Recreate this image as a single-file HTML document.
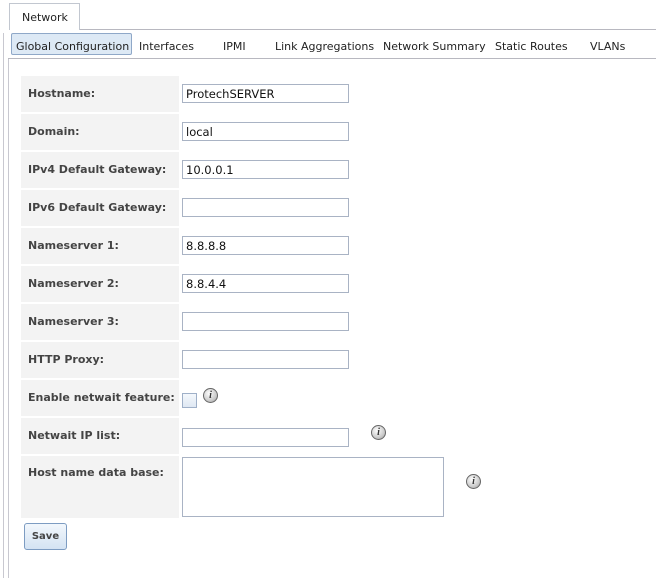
<!DOCTYPE html>
<html><head><style>
body{margin:0;width:656px;height:578px;background:#fff;position:relative;overflow:hidden;font-family:"DejaVu Sans","Liberation Sans",sans-serif;font-size:11px;color:#222}
.a{position:absolute}
.lbl{position:absolute;left:21px;width:158px;background:#f3f3f3;font-weight:bold;color:#444;font-size:11px;box-sizing:border-box;padding-left:7px}
.in{position:absolute;left:182px;width:167px;height:19px;border:1px solid #a9b3c4;box-sizing:border-box;font-size:11.5px;padding:2px 0 0 3px;color:#111;background:#fff}
.info{position:absolute;width:15px;height:15px;border-radius:50%;background:radial-gradient(circle at 40% 35%,#fff,#ccc 60%,#999);border:1px solid #666;box-sizing:border-box;font:italic bold 10px "Liberation Serif",serif;text-align:center;line-height:13px;color:#333}
.tab{position:absolute;top:40px;font-size:11px;color:#222}
</style></head><body>
<div class="a" style="left:9px;top:3px;width:71px;height:27px;border:1px solid #c2c7d0;border-bottom:none;box-sizing:border-box;background:#fff"></div>
<div class="a" style="left:22px;top:11px;font-size:11px">Network</div>
<div class="a" style="left:80px;top:29px;width:576px;height:1px;background:#b8b8c0"></div>
<div class="a" style="left:3px;top:33px;width:1px;height:545px;background:#c8c8d0"></div>
<div class="a" style="left:8px;top:58px;width:1px;height:520px;background:#c8c8d0"></div>
<div class="a" style="left:8px;top:58px;width:648px;height:1px;background:#b8b8c0"></div>
<div class="a" style="left:11px;top:33px;width:121px;height:22px;background:#dde9f5;border:1px solid #8fa8c8;box-sizing:border-box;border-radius:2px"></div>
<div class="tab" style="left:16px">Global Configuration</div>
<div class="tab" style="left:139px">Interfaces</div>
<div class="tab" style="left:223px">IPMI</div>
<div class="tab" style="left:275px">Link Aggregations</div>
<div class="tab" style="left:383px">Network Summary</div>
<div class="tab" style="left:495px">Static Routes</div>
<div class="tab" style="left:590px">VLANs</div>

<div class="lbl" style="top:76px;height:36px;line-height:36px">Hostname:</div><div class="in" style="top:84px">ProtechSERVER</div>
<div class="lbl" style="top:114px;height:36px;line-height:36px">Domain:</div><div class="in" style="top:122px">local</div>
<div class="lbl" style="top:152px;height:36px;line-height:36px">IPv4 Default Gateway:</div><div class="in" style="top:160px">10.0.0.1</div>
<div class="lbl" style="top:190px;height:36px;line-height:36px">IPv6 Default Gateway:</div><div class="in" style="top:198px"></div>
<div class="lbl" style="top:228px;height:36px;line-height:36px">Nameserver 1:</div><div class="in" style="top:236px">8.8.8.8</div>
<div class="lbl" style="top:266px;height:36px;line-height:36px">Nameserver 2:</div><div class="in" style="top:274px">8.8.4.4</div>
<div class="lbl" style="top:304px;height:36px;line-height:36px">Nameserver 3:</div><div class="in" style="top:312px"></div>
<div class="lbl" style="top:342px;height:36px;line-height:36px">HTTP Proxy:</div><div class="in" style="top:350px"></div>
<div class="lbl" style="top:380px;height:36px;line-height:36px">Enable netwait feature:</div>
<div class="a" style="left:182px;top:393px;width:15px;height:15px;border:1px solid #9fb0c8;box-sizing:border-box;background:linear-gradient(#f4f8fc,#dfe8f3)"></div>
<div class="info" style="left:203px;top:388px">i</div>
<div class="lbl" style="top:418px;height:36px;line-height:36px">Netwait IP list:</div><div class="in" style="top:428px"></div>
<div class="info" style="left:371px;top:425px">i</div>
<div class="lbl" style="top:456px;height:62px;padding-top:10px">Host name data base:</div>
<div class="a" style="left:182px;top:457px;width:262px;height:60px;border:1px solid #a9b3c4;box-sizing:border-box"></div>
<div class="info" style="left:466px;top:474px">i</div>
<div class="a" style="left:24px;top:523px;width:43px;height:27px;border:1px solid #7d9cc2;border-radius:3px;box-sizing:border-box;background:linear-gradient(#f2f7fc,#d4e3f3);font-weight:bold;font-size:10px;color:#444;text-align:center;line-height:25px">Save</div>
</body></html>
